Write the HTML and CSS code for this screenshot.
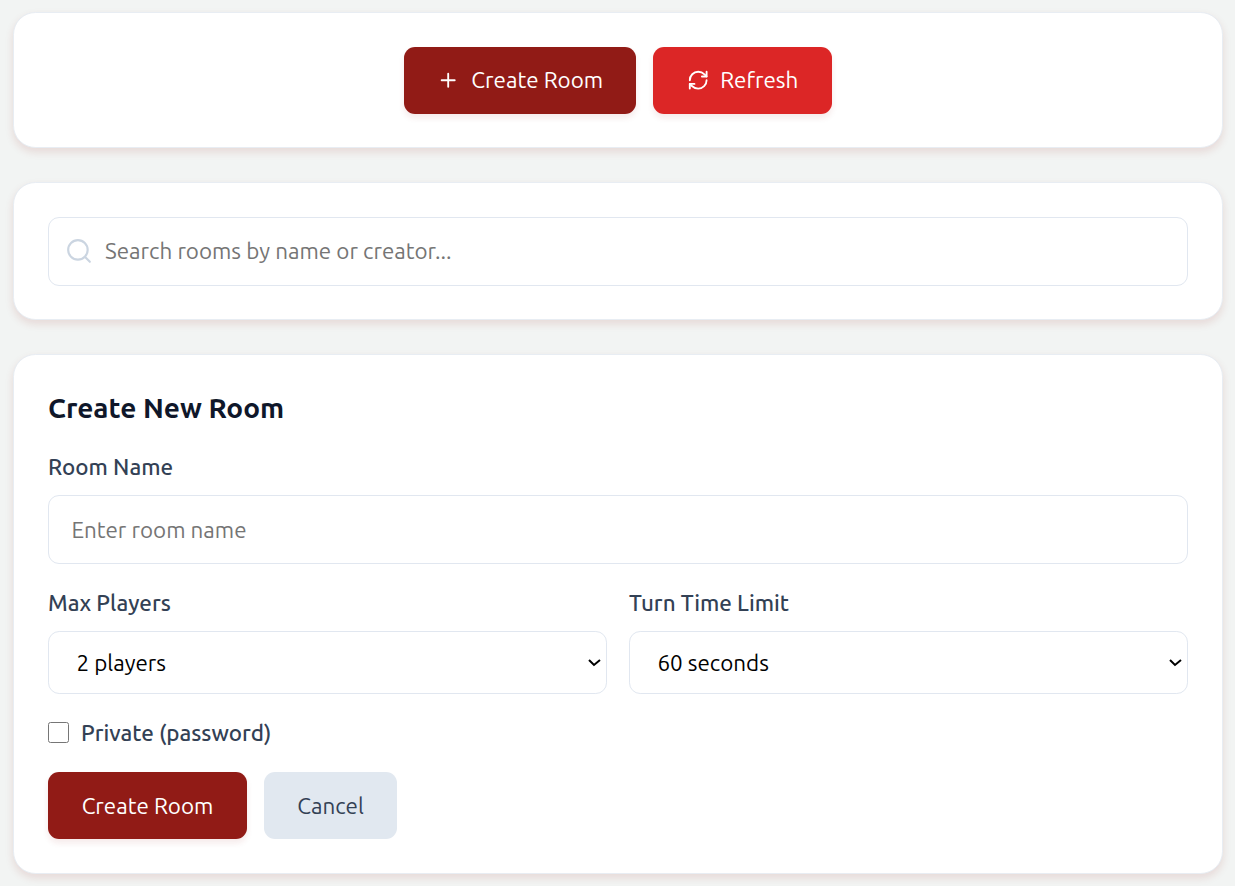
FILE: index.html
```html
<!DOCTYPE html>
<html lang="en">
<head>
<meta charset="utf-8">
<title>Rooms</title>
<link rel="stylesheet" href="styles.css">
</head>
<body>
<main class="page">
  <section class="card actions">
    <button class="btn btn-primary btn-create" type="button">
      <svg class="icon" viewBox="0 0 24 24"><path d="M5 12h14M12 5v14"/></svg>
      <span class="btn-text">Create Room</span>
    </button>
    <button class="btn btn-danger" type="button">
      <svg class="icon" viewBox="0 0 24 24"><path d="M3 12a9 9 0 0 1 9-9 9.75 9.75 0 0 1 6.74 2.74L21 8"/><path d="M21 3v5h-5"/><path d="M21 12a9 9 0 0 1-9 9 9.75 9.75 0 0 1-6.74-2.74L3 16"/><path d="M8 16H3v5"/></svg>
      <span class="btn-text">Refresh</span>
    </button>
  </section>

  <section class="card search-card">
    <label class="field search">
      <svg class="search-icon" viewBox="0 0 24 24"><circle cx="11" cy="11" r="9"/><path d="M22 22l-4.6-4.6"/></svg>
      <input class="input" type="text" placeholder="Search rooms by name or creator...">
    </label>
  </section>

  <section class="card form-card">
    <h2 class="title">Create New Room</h2>
    <label class="label" for="name">Room Name</label>
    <div class="field name-field"><input class="input" id="name" type="text" placeholder="Enter room name"></div>
    <div class="grid">
      <div>
        <label class="label" for="players">Max Players</label>
        <select class="select" id="players"><option>2 players</option></select>
      </div>
      <div>
        <label class="label" for="time">Turn Time Limit</label>
        <select class="select" id="time"><option>60 seconds</option></select>
      </div>
    </div>
    <label class="check"><input class="checkbox" type="checkbox"><span>Private (password)</span></label>
    <div class="buttons">
      <button class="btn btn-primary btn-submit" type="button">Create Room</button>
      <button class="btn btn-muted" type="button">Cancel</button>
    </div>
  </section>
</main>
</body>
</html>
```
FILE: styles.css
```css
* { box-sizing: border-box; }
body {
  margin: 0;
  height: 886px;
  overflow: hidden;
  background: #f2f4f3;
  font-family: Ubuntu, "Open Sans", "Noto Sans", sans-serif;
  font-size: 22.4px;
  line-height: 33px;
}
.page {
  display: flex;
  flex-direction: column;
  gap: 34px;
  padding: 12px 12px 0 13px;
}
.card {
  flex: none;
  background: #fff;
  border: 1px solid #e8edf3;
  border-radius: 22.4px;
  padding: 0 34px;
  box-shadow: 0 4px 8px rgba(145, 27, 20, .12);
}
.actions {
  height: 136px;
  display: flex;
  justify-content: center;
  align-items: center;
  gap: 17px;
}
.search-card { height: 138px; padding-top: 34px; }
.form-card { height: 520px; padding-top: 34px; }
.btn {
  height: 67px;
  border: 0;
  border-radius: 11px;
  padding: 0;
  display: flex;
  align-items: center;
  justify-content: center;
  gap: 11.2px;
  font: 400 22.4px/33px Ubuntu, "Open Sans", "Noto Sans", sans-serif;
  color: #fff;
  white-space: nowrap;
}
.btn-text { padding-bottom: 2px; }
.btn-primary { background: #911b16; box-shadow: 0 4px 6px rgba(145, 27, 20, .09); }
.btn-create { width: 232px; gap: 12px; }
.btn-submit { width: 199px; }
.btn-danger { width: 179px; background: #dc2626; box-shadow: 0 4px 6px rgba(145, 27, 20, .09); }
.btn-muted { width: 133px; background: #e1e8f0; color: #334155; }
.icon {
  width: 22.4px;
  height: 22.4px;
  fill: none;
  stroke: currentColor;
  stroke-width: 2;
  stroke-linecap: round;
  stroke-linejoin: round;
}
.field {
  display: flex;
  align-items: center;
  height: 69px;
  border: 1px solid #e1e7f0;
  border-radius: 11px;
}
.search { padding: 0 0 2px 17px; gap: 13px; }
.search-icon {
  flex: none;
  width: 26px;
  height: 26px;
  fill: none;
  stroke: #cbd5e1;
  stroke-width: 2;
  stroke-linecap: round;
}
.input {
  flex: 1;
  min-width: 0;
  border: 0;
  outline: 0;
  padding: 0;
  background: transparent;
  font: 400 22.4px/33px Ubuntu, "Open Sans", "Noto Sans", sans-serif;
}
.input::placeholder { color: #757575; }
.name-field { padding-left: 22.4px; margin-bottom: 22px; }
.title {
  margin: 0 0 24px;
  font-size: 28px;
  line-height: 37px;
  font-weight: 700;
  color: #0f172a;
}
.label {
  display: block;
  width: max-content;
  height: 34px;
  margin-bottom: 11px;
  font-weight: 500;
  color: #334155;
}
.grid {
  display: grid;
  grid-template-columns: 1fr 1fr;
  gap: 22px;
}
.select {
  display: block;
  zoom: 1.4;
  width: 100%;
  height: 45px;
  padding: 0 0 0 16px;
  border: 1px solid #e1e7f0;
  border-radius: 8px;
  background: #fff;
  color: #000;
  font: 400 16px/24px Ubuntu, "Open Sans", "Noto Sans", sans-serif;
}
.check {
  display: flex;
  align-items: center;
  gap: 12px;
  width: max-content;
  height: 34px;
  margin: 21px 0 23px;
  font-weight: 500;
  color: #334155;
}
.checkbox { width: 21px; height: 21px; margin: 0; }
.buttons { display: flex; gap: 17px; }
```
